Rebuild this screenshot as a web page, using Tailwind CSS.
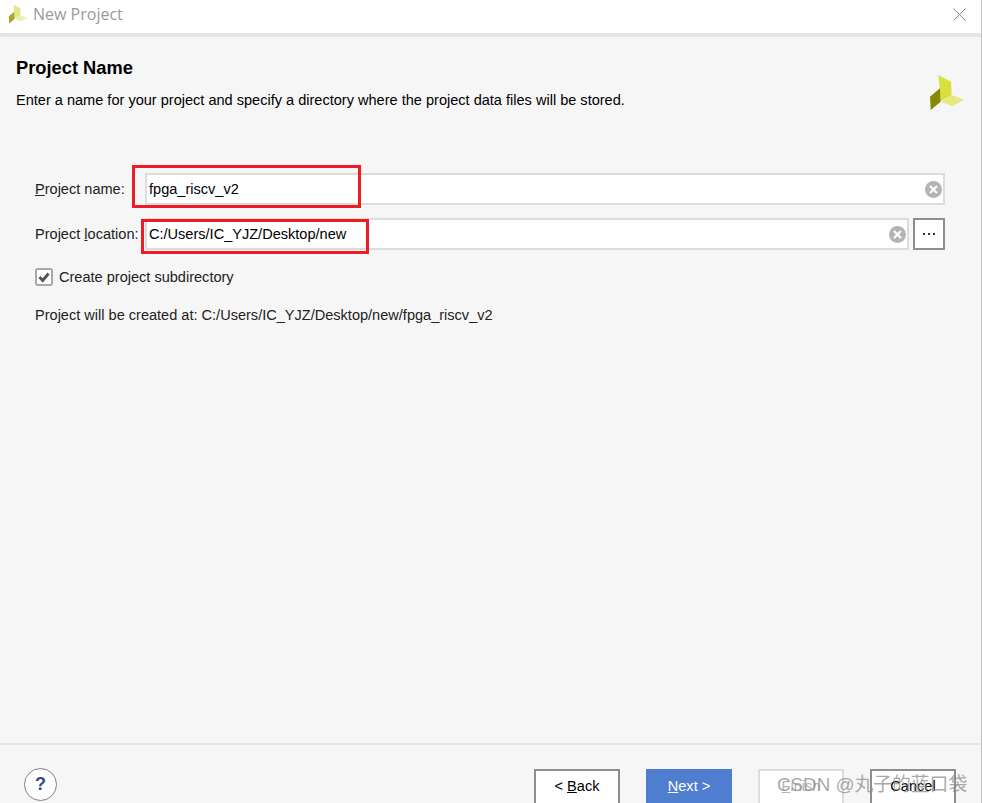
<!DOCTYPE html>
<html lang="en">
<head>
    <meta charset="UTF-8">
    <title>New Project</title>
    <script src="https://cdn.jsdelivr.net/npm/@tailwindcss/browser@4"></script>
</head>
<body class="bg-[#f6f6f6] font-['Liberation_Sans','Noto_Sans_CJK_SC',sans-serif] text-black">
<div class="relative w-[982px] h-[803px] overflow-hidden flex flex-col border-r border-[#c8c8c8]">

    <!-- title bar -->
    <header class="h-[37px] shrink-0 bg-white border-b-4 border-[#e5e5e5] flex items-start pl-[8px] pr-[15px]">
        <svg class="w-[20px] h-[20px] mt-[4px]" viewBox="147 222 108 111">
            <polygon points="175,225 213,245 215,285 183,303" fill="#e4e88a"/>
            <polygon points="215,285 253,300 217,318 183,305" fill="#eef0ae"/>
            <polygon points="150,290 180,265 182,305 152,330" fill="#a8a82e"/>
        </svg>
        <span class="ml-[5px] mt-[4px] text-[16px] leading-[20px] text-[#9a9a9a] font-['Open_Sans',sans-serif]">New Project</span>
        <svg class="ml-auto mt-[8px] w-[13px] h-[13px]" viewBox="0 0 13 13" fill="none" stroke="#8a8a8a" stroke-width="1">
            <path d="M0.5 0.5 L12.5 12.5 M12.5 0.5 L0.5 12.5"/>
        </svg>
    </header>

    <!-- heading -->
    <section class="relative h-[136px] shrink-0 pl-[16px]">
        <h1 class="mt-[21px] text-[18.3px] leading-[20px] font-bold">Project Name</h1>
        <p class="mt-[12px] text-[14.55px] leading-[20px]">Enter a name for your project and specify a directory where the project data files will be stored.</p>
        <svg class="absolute left-[929px] top-[37px] w-[36px] h-[37px]" viewBox="147 222 108 111">
            <polygon points="175,225 213,245 215,285 183,303" fill="#d9df3c"/>
            <polygon points="215,285 253,300 217,318 183,305" fill="#e6ea7e"/>
            <polygon points="150,290 180,265 182,305 152,330" fill="#858a00"/>
        </svg>
    </section>

    <!-- form -->
    <main class="flex-1 pl-[35px] pr-[36px] text-[14.55px] text-[#222]">
        <div class="flex items-center h-[32px]">
            <label class="w-[110px] shrink-0 pt-[1px]"><span class="underline">P</span>roject name:</label>
            <div class="flex-1 h-full bg-white border-2 border-[#dcdcdc] flex items-center pl-[2px] pr-[1px]">
                <span class="text-black pt-[2px]">fpga_riscv_v2</span>
                <svg class="ml-auto w-[17px] h-[17px]" viewBox="0 0 17 17">
                    <circle cx="8.5" cy="8.5" r="8.5" fill="#b4b4b4"/>
                    <path d="M5 5 L12 12 M12 5 L5 12" stroke="#fff" stroke-width="2.2"/>
                </svg>
            </div>
        </div>
        <div class="flex items-center h-[32px] mt-[13px]">
            <label class="w-[110px] shrink-0 whitespace-nowrap pt-[1px]">Project <span class="underline">l</span>ocation:</label>
            <div class="flex-1 h-full bg-white border-2 border-[#dcdcdc] flex items-center pl-[2px] pr-[1px]">
                <span class="text-black pt-[1px]">C:/Users/IC_YJZ/Desktop/new</span>
                <svg class="ml-auto w-[17px] h-[17px]" viewBox="0 0 17 17">
                    <circle cx="8.5" cy="8.5" r="8.5" fill="#b4b4b4"/>
                    <path d="M5 5 L12 12 M12 5 L5 12" stroke="#fff" stroke-width="2.2"/>
                </svg>
            </div>
            <button class="ml-[4px] w-[32px] h-full shrink-0 bg-white border-2 border-[#8e8e8e] flex items-center justify-center gap-[3px]">
                <span class="w-[2px] h-[2px] bg-[#333]"></span>
                <span class="w-[2px] h-[2px] bg-[#333]"></span>
                <span class="w-[2px] h-[2px] bg-[#333]"></span>
            </button>
        </div>
        <div class="flex items-center mt-[18px] h-[18px]">
            <span class="w-[18px] h-[18px] rounded-[3px] bg-white border-2 border-[#a8a8a8] flex items-center justify-center">
                <svg class="w-[12px] h-[12px]" viewBox="0 0 12 12" fill="none" stroke="#555" stroke-width="2.8">
                    <path d="M1.5 6 L4.7 9.5 L10.5 2.5"/>
                </svg>
            </span>
            <span class="ml-[6px] pt-[1px]">Create project subdirectory</span>
        </div>
        <p class="mt-[19px] leading-[20px]">Project will be created at: C:/Users/IC_YJZ/Desktop/new/fpga_riscv_v2</p>
    </main>

    <!-- footer -->
    <footer class="h-[60px] shrink-0 border-t-2 border-[#e5e5e5] flex items-start pt-[24px] pl-[24px] pr-[25px] text-[14.55px]">
        <button class="w-[33px] h-[33px] -mt-[1px] rounded-full bg-white border border-[#808080] flex items-center justify-center text-[18px] font-bold text-[#2f4b8f]">?</button>
        <div class="ml-auto flex gap-[26px]">
            <button class="w-[86px] h-[40px] bg-white border-2 border-[#8e8e8e] pb-[4px]">&lt; <span class="underline">B</span>ack</button>
            <button class="w-[86px] h-[40px] bg-[#4f7dcf] text-white pb-[4px]"><span class="underline">N</span>ext &gt;</button>
            <button class="w-[86px] h-[40px] bg-white border-2 border-[#dcdcdc] text-[#b5b5b5] pb-[4px]"><span class="underline">F</span>inish</button>
            <button class="w-[86px] h-[40px] bg-white border-2 border-[#8e8e8e] pb-[4px]">Cancel</button>
        </div>
    </footer>

    <!-- red annotation boxes drawn over the dialog -->
    <div class="absolute left-[132px] top-[165px] w-[229px] h-[43px] border-[3px] border-[#ee1c25]"></div>
    <div class="absolute left-[141px] top-[219px] w-[228px] h-[35px] border-[3px] border-[#ee1c25]"></div>

    <!-- watermark -->
    <div class="absolute left-[777px] top-[774px] text-[18.8px] leading-[22px] text-[#8c8c8c]/75 whitespace-nowrap">CSDN @丸子的蓝口袋</div>
</div>
</body>
</html>
